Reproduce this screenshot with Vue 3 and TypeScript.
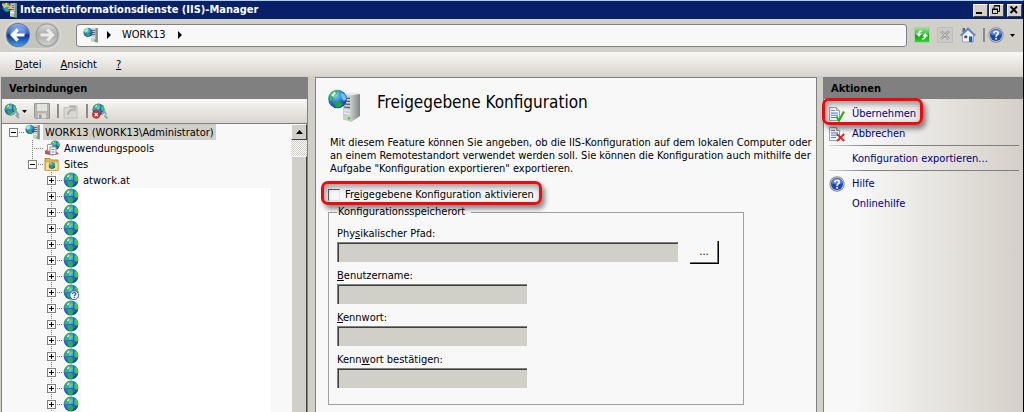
<script setup lang="ts">
import { ref } from 'vue'

interface Site { name: string; unknown: boolean }
interface Field { id: string; before: string; key: string; after: string; wide: boolean; type: string }

const sites: Site[] = Array.from({ length: 15 }, (_, i) => ({
  name: i === 0 ? 'atwork.at' : '',
  unknown: i === 7,
}))

const fields: Field[] = [
  { id: 'path', before: 'Phy', key: 's', after: 'ikalischer Pfad:', wide: true, type: 'text' },
  { id: 'user', before: '', key: 'B', after: 'enutzername:', wide: false, type: 'text' },
  { id: 'pass', before: '', key: 'K', after: 'ennwort:', wide: false, type: 'password' },
  { id: 'confirm', before: 'Kenn', key: 'w', after: 'ort bestätigen:', wide: false, type: 'password' },
]

const shared = ref(false)
</script>

<template>
  <div class="window">
    <svg class="defs" aria-hidden="true">
      <defs>
        <radialGradient id="gSea" cx="40%" cy="30%" r="70%">
          <stop offset="0" stop-color="#8fd0f4" /><stop offset=".5" stop-color="#2f86cf" /><stop offset="1" stop-color="#1a3c9c" />
        </radialGradient>
        <linearGradient id="gBlue" x1="0" y1="0" x2="0" y2="1">
          <stop offset="0" stop-color="#8fb2ee" /><stop offset=".45" stop-color="#2b5cc4" /><stop offset=".5" stop-color="#0b2f92" /><stop offset="1" stop-color="#39a0f4" />
        </linearGradient>
        <linearGradient id="gGrey" x1="0" y1="0" x2="0" y2="1">
          <stop offset="0" stop-color="#d8d8d6" /><stop offset=".5" stop-color="#acacaa" /><stop offset="1" stop-color="#cfcfcd" />
        </linearGradient>
        <linearGradient id="gGreen" x1="0" y1="0" x2="0" y2="1">
          <stop offset="0" stop-color="#9be29b" /><stop offset=".45" stop-color="#3cc23c" /><stop offset=".5" stop-color="#0b9a12" /><stop offset="1" stop-color="#2fe02f" />
        </linearGradient>
        <linearGradient id="gSide" x1="0" y1="0" x2="1" y2="0">
          <stop offset="0" stop-color="#c4c8c8" /><stop offset="1" stop-color="#7e8484" />
        </linearGradient>
      </defs>
      <symbol id="globe" viewBox="0 0 16 16">
        <circle cx="8" cy="8" r="7.4" fill="url(#gSea)" />
        <path d="M2.2 4.2 5 1.5 8.2 1 8 3.6 6.4 5 5.6 7.2 3.2 7.6 1.6 9Z" fill="#35b848" />
        <path d="M11.5 3.2 13.6 3.6 15 6.2 15 9 13 10 11.4 7.6Z" fill="#4cc81e" />
        <path d="M4 10.4 6.6 9.6 10.4 11.6 9.8 14.4 7.4 15 4.8 13.4Z" fill="#1fb34a" />
        <path d="M3.8 4.4 6 2.4 6.6 3.8 4.6 5.6Z" fill="#effff2" />
        <path d="M1 9.5 5.6 8.4 11 8.6M10.6 2V9.8" fill="none" stroke="#2456b4" stroke-width=".8" />
      </symbol>
      <symbol id="server" viewBox="0 0 16 16">
        <path d="M8 1.5 14.5 1V15.5L8 14.5Z" fill="#c9cdcd" />
        <path d="M12.5 1.2 14.8 1V15.5L12.5 15.1Z" fill="#858b8b" />
        <path d="M8.5 3.5H12M8.5 5.5H12M8.5 7.5H12" stroke="#59605f" stroke-width=".9" />
        <path d="M8.5 10.5H12" stroke="#f4f6f6" />
        <rect x="11.5" y="12.6" width="2" height="2" fill="#3fd012" />
        <circle cx="5" cy="5.4" r="4.6" fill="url(#gSea)" />
        <path d="M1 3.5 3.6 1.2 5.4 1.2 4.4 4.2 2.4 6Z" fill="#9ff0ac" />
        <path d="M3 7.2 5.8 6.6 7.8 8.4 5.4 9.8 3.8 9.4Z" fill="#27b53e" />
      </symbol>
      <symbol id="help" viewBox="0 0 16 16">
        <circle cx="8" cy="8" r="7.7" fill="#8b8d90" />
        <circle cx="8" cy="8" r="6.8" fill="#c9ccd2" />
        <circle cx="8" cy="8" r="6" fill="#1c48b4" />
        <path d="M2.6 7A5.5 5.5 0 0 1 13.4 7Q8 9.5 2.6 7Z" fill="#5586dc" />
        <path d="M5.9 6.2C5.9 3.6 10.3 3.6 10.2 6.2C10.2 7.6 8.1 7.8 8.1 9.8" fill="none" stroke="#fff" stroke-width="1.7" />
        <rect x="7.2" y="10.8" width="1.8" height="1.8" fill="#fff" />
      </symbol>
      <symbol id="sheet" viewBox="0 0 16 16">
        <path d="M.5 1.5H7.5L10.5 4.5V14.5H.5Z" fill="#f2f4f6" stroke="#a0a2a6" />
        <path d="M7.5 1.5V4.5H10.5" fill="#d5d8dc" stroke="#a0a2a6" />
        <path d="M2 4.5H6" stroke="#8a9099" /><path d="M2 7H9M2 9.2H9M2 11.5H7" stroke="#4a86c6" />
      </symbol>
    </svg>

    <header class="titlebar">
      <svg class="i16" viewBox="0 0 16 16" aria-hidden="true">
        <use href="#server" width="16" height="16" />
        <path d="M0 1.5H4.5L7.5 4 10 2.5V7H5.5L7 5.5 4.5 3.8H0Z" fill="#f3b62a" />
      </svg>
      <h1>Internetinformationsdienste (IIS)-Manager</h1>
      <button class="win" aria-label="Minimieren"><svg viewBox="0 0 12 10"><path d="M2 8H8" stroke="#000" stroke-width="2" /></svg></button>
      <button class="win" aria-label="Wiederherstellen"><svg viewBox="0 0 12 10"><path d="M4 1H10M4 1.5V4M9.5 1V6.5H8M2 4H8M2.5 4V8.5H7.5V4M4 .5H10M2 4.5H8" fill="none" stroke="#000" /></svg></button>
      <button class="win close" aria-label="Schließen"><svg viewBox="0 0 12 10"><path d="M2.5 1.5 9 8M9 1.5 2.5 8" stroke="#000" stroke-width="1.8" /></svg></button>
    </header>

    <nav class="navbar">
      <div class="history">
        <button aria-label="Zurück"><svg viewBox="0 0 24 24">
          <circle cx="12" cy="12" r="12" fill="#68758e" /><circle cx="12" cy="12" r="11" fill="url(#gBlue)" />
          <path d="M3.6 11A8.7 8.7 0 0 1 20.4 11Q12 13 3.6 11Z" fill="#fff" opacity=".22" />
          <path d="M18.5 12H7M11.8 6.5 6.3 12 11.8 17.5" fill="none" stroke="#fff" stroke-width="3.2" />
        </svg></button>
        <button aria-label="Vorwärts" disabled><svg viewBox="0 0 24 24">
          <circle cx="12" cy="12" r="11.5" fill="#989896" /><circle cx="12" cy="12" r="10.6" fill="url(#gGrey)" />
          <path d="M5.5 12H17M12.2 6.5 17.7 12 12.2 17.5" fill="none" stroke="#ecece9" stroke-width="3" />
        </svg></button>
      </div>
      <div class="address">
        <svg class="i16" aria-hidden="true"><use href="#server" /></svg>
        <svg class="arrow" viewBox="0 0 4 8"><path d="M0 0 4 4 0 8Z" /></svg>
        <span>WORK13</span>
        <svg class="arrow" viewBox="0 0 4 8"><path d="M0 0 4 4 0 8Z" /></svg>
      </div>
      <div class="navtools">
        <button aria-label="Aktualisieren"><svg class="i16" viewBox="0 0 16 16">
          <rect x=".5" y=".5" width="15" height="15" fill="url(#gGreen)" stroke="#a9d4a6" />
          <path d="M7.8 4C5.8 4 5 5 5 7M8.2 12C10.4 12 11.2 11 11.2 9" fill="none" stroke="#fff" stroke-width="1.5" />
          <path d="M1.8 6.4H8.2L5 10ZM8 9.6H14.4L11.2 6Z" fill="#fff" />
        </svg></button>
        <button aria-label="Anhalten" disabled><svg class="i16" viewBox="0 0 16 16">
          <rect x=".5" y=".5" width="15" height="15" fill="#cacac6" stroke="#bebeba" />
          <path d="M4 4 12 12M12 4 4 12" stroke="#a2a29f" stroke-width="2.6" /><path d="M4 4 12 12M12 4 4 12" stroke="#c6c6c4" stroke-width="1" />
        </svg></button>
        <button aria-label="Startseite"><svg class="i16" viewBox="0 0 16 16">
          <path d="M2.5 8 8 3 13.5 8V15H2.5Z" fill="#edf2f8" stroke="#9aa6b8" />
          <path d="M2.5 1H5V5H2.5Z" fill="#56688e" />
          <path d="M.6 8.6 8 1.4 15.4 8.6" fill="none" stroke="#5f83c0" stroke-width="1.7" />
          <rect x="9" y="9.4" width="3.4" height="5.6" fill="#2560b8" /><rect x="4.4" y="8.6" width="2.8" height="2.6" fill="#4a5058" />
        </svg></button>
        <i class="sep"></i>
        <button class="helpbtn" aria-label="Hilfe"><svg class="i16"><use href="#help" /></svg><svg class="down" viewBox="0 0 5 3"><path d="M0 0H5L2.5 3Z" /></svg></button>
      </div>
    </nav>

    <div class="menubar">
      <button><u>D</u>atei</button>
      <button><u>A</u>nsicht</button>
      <button><u>?</u></button>
    </div>

    <main class="panes">
      <section class="pane connections">
        <h2>Verbindungen</h2>
        <div class="toolbar">
          <button class="connect" aria-label="Verbinden"><svg class="i16" viewBox="0 0 16 16"><use href="#globe" width="13" height="13" /><path d="M7 12 12 8.5 14.2 11.5 11.5 13.2M12.5 12.5 15 15" fill="none" stroke="#8fa4b2" stroke-width="2" /></svg><svg class="down" viewBox="0 0 5 3"><path d="M0 0H5L2.5 3Z" /></svg></button>
          <button class="save" aria-label="Speichern" disabled><svg class="i16" viewBox="0 0 16 16"><path d="M.5.5H15.5V15.5H1.5L.5 14.5Z" fill="#b4b4b2" stroke="#989896" /><rect x="3" y="1" width="10" height="7" fill="#e2e2de" /><rect x="4" y="10.5" width="8" height="5" fill="#dcdcd8" /><rect x="5" y="11.5" width="2.5" height="4" fill="#969694" /></svg></button>
          <i class="sep"></i>
          <button class="up" aria-label="Nach oben" disabled><svg class="i16" viewBox="0 0 16 16"><path d="M1 4.5H5L6.5 3H14V15H1Z" fill="#d8d7d3" stroke="#bfbeba" /><path d="M4.5 11.5 7 7.5 10 6.5M6.5 3.5H11.5V8" fill="none" stroke="#b0afab" stroke-width="2" /></svg></button>
          <i class="sep"></i>
          <button class="disconnect" aria-label="Trennen"><svg class="i16" viewBox="0 0 16 16"><use href="#globe" width="13" height="13" /><path d="M10 11 12.5 8.5 14.2 11.5M12.5 12.5 15.5 15.5" fill="none" stroke="#8fa4b2" stroke-width="2" /><circle cx="4.2" cy="11.6" r="4.1" fill="#d22a26" /><path d="M2.6 10 5.8 13.2M5.8 10 2.6 13.2" stroke="#fff" stroke-width="1.3" /></svg></button>
        </div>
        <div class="treebox">
          <ul class="tree">
            <li class="root">
              <button class="box" aria-label="Reduzieren"></button><i class="dots"></i>
              <svg class="i16"><use href="#server" /></svg><span class="selected">WORK13 (WORK13\Administrator)</span>
            </li>
            <li class="pools">
              <i class="dots long"></i>
              <svg class="i16" viewBox="0 0 16 16"><use href="#globe" x="6" y="0" width="10" height="10" /><path d="M1 11 4 9 13 12 15 14 8 15.5 1 14Z" fill="#c85050" /><path d="M3.5 4.5H8.5V11H3.5Z" fill="#f6f8fb" stroke="#8d99aa" /><path d="M6 7H12V14.5H6Z" fill="#f6f8fb" stroke="#8d99aa" /><path d="M7.5 9.5H10.5M7.5 12H10.5" stroke="#7294be" /></svg>
              <span>Anwendungspools</span>
            </li>
            <li class="folder">
              <button class="box" aria-label="Reduzieren"></button><i class="dots"></i>
              <svg class="i16" viewBox="0 0 16 16"><path d="M1 2.5H6L7.5 4H14V14.5H1Z" fill="#e2b64c" stroke="#b98c2e" /><path d="M1.5 6H14V14.5H1.5Z" fill="#f8dd8a" stroke="#cfa544" stroke-width=".7" /><use href="#globe" x="4.5" y="6" width="7" height="7" /></svg>
              <span>Sites</span>
            </li>
            <li v-for="(s, i) in sites" :key="i" class="site" :class="{ blank: !s.name }">
              <button class="box" aria-label="Erweitern"></button><i class="dots"></i>
              <svg class="i16" viewBox="0 0 16 16"><use href="#globe" width="16" height="16" />
                <g v-if="s.unknown"><circle cx="11.2" cy="11.2" r="4.4" fill="#fff" stroke="#1f48a8" stroke-width=".9" /><path d="M9.6 10C9.6 8 12.9 8 12.8 10C12.8 11.1 11.3 11 11.3 12.3M11.3 13V14" fill="none" stroke="#1f48a8" stroke-width="1.2" /></g>
              </svg>
              <span>{{ s.name }}</span>
            </li>
          </ul>
          <div class="scroll">
            <button aria-label="Nach oben scrollen"><svg viewBox="0 0 7 4"><path d="M0 4H7L3.5 0Z" /></svg></button>
            <div class="thumb"></div>
          </div>
        </div>
      </section>

      <section class="pane content">
        <div class="heading">
          <svg viewBox="0 0 34 34" aria-hidden="true">
            <path d="M15 5 23 4V33L15 30.5Z" fill="#c9cdcd" /><path d="M23 4 32 5V27L23 33Z" fill="url(#gSide)" /><path d="M15 5 24 3.2 32 5 23 6.4Z" fill="#e6e8e8" />
            <path d="M16 9 22 9.4M16 12 22 12.4M16 15 22 15.4M16 18 22 18.6" stroke="#4f5655" stroke-width="1.2" /><path d="M16 21 22 22M16 24 22 25.2" stroke="#f2f4f4" />
            <circle cx="21" cy="29.3" r="1.4" fill="#4ade10" />
            <circle cx="9.5" cy="10" r="9.3" fill="url(#gSea)" />
            <path d="M1 7 4 2.5 9 1 8.6 5 5.6 7.6 4.4 11 1.6 12Z" fill="#35b848" /><path d="M3 6 6.4 2.6 8 4 5 8Z" fill="#dcffe2" /><path d="M13 3.5 17 6 18.5 10 16 12 13.6 9Z" fill="#6bc4e8" /><path d="M5.6 13.4 10 12.4 14.8 15 12 18.4 8 18.4Z" fill="#1fa63e" />
          </svg>
          <h2>Freigegebene Konfiguration</h2>
        </div>
        <p>Mit diesem Feature können Sie angeben, ob die IIS-Konfiguration auf dem lokalen Computer oder<br>an einem Remotestandort verwendet werden soll. Sie können die Konfiguration auch mithilfe der<br>Aufgabe "Konfiguration exportieren" exportieren.</p>
        <label class="toggle marked"><input v-model="shared" type="checkbox"><span>Fr<u>e</u>igegebene Konfiguration aktivieren</span></label>
        <fieldset>
          <legend>Konfigurationsspeicherort</legend>
          <div v-for="f in fields" :key="f.id" class="field" :class="{ wide: f.wide }">
            <label :for="f.id">{{ f.before }}<u>{{ f.key }}</u>{{ f.after }}</label>
            <div class="line">
              <input :id="f.id" :type="f.type" :disabled="!shared">
              <button v-if="f.wide" class="browse" aria-label="Durchsuchen">...</button>
            </div>
          </div>
        </fieldset>
      </section>

      <aside class="pane actions">
        <h2>Aktionen</h2>
        <ul>
          <li class="marked apply"><svg class="i16" viewBox="0 0 16 16"><use href="#sheet" width="16" height="16" /><path d="M7.5 10.5 10 14.5 15 5.5" fill="none" stroke="#2fae12" stroke-width="2.2" /></svg><a href="#">Übernehmen</a></li>
          <li><svg class="i16" viewBox="0 0 16 16"><use href="#sheet" width="16" height="16" /><path d="M8 8 15.2 15.2M15.2 8 8 15.2" stroke="#e0211c" stroke-width="1.9" /></svg><a href="#">Abbrechen</a></li>
          <li class="rule"></li>
          <li><i class="i16"></i><a href="#">Konfiguration exportieren...</a></li>
          <li class="rule"></li>
          <li><svg class="i16" aria-hidden="true"><use href="#help" /></svg><a href="#">Hilfe</a></li>
          <li><i class="i16"></i><a href="#">Onlinehilfe</a></li>
        </ul>
      </aside>
    </main>
  </div>
</template>

<style>
body { background: #d0d0c8; }
</style>

<style scoped>
* { box-sizing: border-box; }
.window { min-height: 100vh; display: flex; flex-direction: column; background: #d0d0c8; border-top: 1px solid #b5cfe2; border-right: 1px solid #000; font: 11px/14px "DejaVu Sans Condensed", "DejaVu Sans", sans-serif; color: #000; }
.defs { position: absolute; width: 0; height: 0; }
.i16 { width: 16px; height: 16px; flex: none; display: block; }
button { font: inherit; color: inherit; border: 0; padding: 0; margin: 0; background: none; }
h1, h2, p, ul { margin: 0; padding: 0; }
ul { list-style: none; }
u { text-underline-offset: 1px; }

.titlebar { height: 18px; flex: none; display: flex; align-items: center; background: #082068; color: #fff; padding: 0 1px 0 2px; }
.titlebar h1 { flex: 1; font-size: 11px; line-height: 18px; margin-left: 2px; white-space: nowrap; }
.win { width: 15px; height: 13px; background: #d4d0c8; border: 1px solid; border-color: #fff #404040 #404040 #fff; }
.win svg { width: 12px; height: 10px; display: block; }
.win + .win { margin-left: 1px; }
.win.close { margin-left: 3px; }

.navbar { height: 33px; flex: none; display: flex; align-items: center; padding: 0 8px 1px 5px; }
.history { display: flex; gap: 5px; padding: 1px; border-radius: 13px; background: #c4c4be; box-shadow: 0 0 1px 1px #deded8; }
.history svg { width: 24px; height: 24px; display: block; }
.address { flex: 1; height: 23px; margin-left: 16px; border: 1px solid #808080; border-radius: 3px; background: #f8f8f8; display: flex; align-items: center; padding-left: 6px; }
.address span { margin: 0 12px 0 11px; }
.arrow { width: 4px; height: 8px; margin-left: 8px; }
.address span + .arrow { margin-left: 0; }
.navtools { display: flex; align-items: center; margin-left: 7px; gap: 7px; }
.navtools button { display: flex; align-items: center; }
.sep { width: 2px; height: 14px; background: #8c8c8a; }
.navtools .helpbtn { margin-left: -4px; gap: 6px; }
.down { width: 5px; height: 3px; }

.menubar { height: 24px; flex: none; display: flex; align-items: center; gap: 19px; padding: 2px 0 0 15px; background: linear-gradient(#f8f8f6, #d8d4ce); }

.panes { flex: 1; display: grid; grid-template-columns: 308px minmax(0, 1fr) 200px; padding-top: 1px; }
.pane h2 { font-size: 11px; line-height: 22px; }
.connections > h2, .actions > h2 { height: 22px; padding: 1px 0 0 7px; background: #808080; }
.connections { margin-left: 1px; border: 1px solid #808080; border-width: 0 1px; display: flex; flex-direction: column; }
.toolbar { height: 24px; display: flex; align-items: center; padding-left: 2px; background: linear-gradient(#f8f8f6, #d8d4ce); }
.toolbar button { display: flex; align-items: center; }
.toolbar .connect { gap: 2px; }
.toolbar .save { margin: 0 7px; }
.toolbar .up { margin: 0 7px 0 4px; }
.toolbar .disconnect { margin-left: 4px; }
.treebox { flex: 1; display: flex; border-top: 1px solid #808080; background: #f8f8f8; }
.tree { flex: 1; min-width: 0; }
.tree li { height: 16px; display: flex; align-items: center; white-space: nowrap; position: relative; }
.root { padding-left: 7px; }
.pools { padding-left: 31px; }
.folder { padding-left: 26px; }
.site { padding-left: 45px; }
.box { position: relative; width: 9px; height: 9px; flex: none; border: 1px solid #808080; background: #fff; z-index: 1; }
.box::before { content: ""; position: absolute; left: 1px; top: 3px; width: 5px; height: 1px; background: #000; }
.site .box::after { content: ""; position: absolute; left: 3px; top: 1px; width: 1px; height: 5px; background: #000; }
.dots { width: 6px; height: 1px; flex: none; background: repeating-linear-gradient(90deg, #808080 0 1px, transparent 1px 2px); margin-left: 1px; }
.dots.long { width: 10px; }
.site::before, .folder::before, .pools::before { content: ""; position: absolute; left: 30px; top: 0; width: 1px; height: 100%; background: repeating-linear-gradient(#808080 0 1px, transparent 1px 2px); }
.site::before { left: 49px; }
.folder::before { height: 5px; }
.tree span { margin-left: 4px; padding-top: 2px; line-height: 14px; }
.tree .selected { background: #d0d0c8; padding: 2px 2px 0; margin-left: 2px; }
.site.blank span { align-self: stretch; flex: 1; background: #fff; margin: 0 20px 0 2px; }
.scroll { width: 16px; display: flex; flex-direction: column; background: repeating-conic-gradient(#d4d0c8 0 25%, #fff 0 50%) 0 0 / 2px 2px; }
.scroll button { width: 16px; height: 16px; background: #d0d0c8; border: 1px solid; border-color: #f8f8f8 #404040 #404040 #f8f8f8; display: grid; place-items: center; }
.scroll button svg { width: 7px; height: 4px; }
.thumb { flex: 1; margin-top: 16px; background: #d0d0c8; border: 1px solid; border-color: #f8f8f8 #404040 #404040 #f8f8f8; border-bottom: 0; }

.content { margin: 0 6px 0 7px; border: 1px solid #808080; border-bottom: 0; background: #f8f8f8; padding: 11px 4px 8px 12px; }
.heading { display: flex; align-items: center; gap: 15px; }
.heading svg { width: 34px; height: 34px; flex: none; }
.heading h2 { font-size: 17px; line-height: 22px; font-weight: 400; margin-bottom: 8px; white-space: nowrap; }
.content p { margin: 13px 0 0 2px; line-height: 13px; white-space: nowrap; }
.toggle { display: flex; width: fit-content; align-items: center; height: 24px; margin-top: 6px; padding: 3px 8px 0 0; gap: 5px; }
.toggle input { appearance: none; width: 12px; height: 12px; margin: 0; background: transparent; border: 1px solid; border-color: #606060 #e8e8e4 #e8e8e4 #606060; }
.toggle input:checked { background: #202020; }
.marked { position: relative; }
.marked::after { content: ""; position: absolute; inset: 0 0 0 -7px; border: 3px solid #f0080c; border-radius: 7px; box-shadow: 3px 4px 5px rgba(0, 0, 0, .45), inset 2px 3px 6px rgba(0, 0, 0, .4); pointer-events: none; }
fieldset { margin: 0; max-width: 416px; min-width: 0; border: 1px solid #a0a0a0; padding: 8px 8px 16px; }
legend { padding: 0 6px 0 1px; line-height: 14px; }
.field + .field { margin-top: 7px; }
.field label { display: block; }
.line { display: flex; align-items: center; gap: 12px; height: 20px; margin-top: 1px; }
.line input { width: 190px; height: 20px; margin: 0; padding: 0 3px; font: inherit; background: #d0d0c8; border: 1px solid #808080; border-width: 1px 0 0 1px; box-shadow: inset 1px 1px #404040; }
.wide .line input { width: auto; flex: 1; max-width: 341px; }
.browse { width: 29px; height: 23px; flex: none; background: #f8f8f8; border: solid #000; border-width: 0 1px 1px 0; box-shadow: inset -1px -1px #707070; }

.actions { border-left: 1px solid #808080; background: linear-gradient(90deg, #f8f8f8 15%, #d4d0c8); }
.actions ul { padding: 5px 4px 0 5px; }
.actions li { height: 20px; display: flex; align-items: center; gap: 7px; }
.actions .rule { height: 1px; margin: 1px 0 3px; background: linear-gradient(90deg, #d8d8d6, #808080 20%); }
.actions a { color: #000080; text-decoration: none; white-space: nowrap; }
.actions .apply { width: fit-content; }
.apply::after { inset: -6px -7px -1px -7px; }
</style>
